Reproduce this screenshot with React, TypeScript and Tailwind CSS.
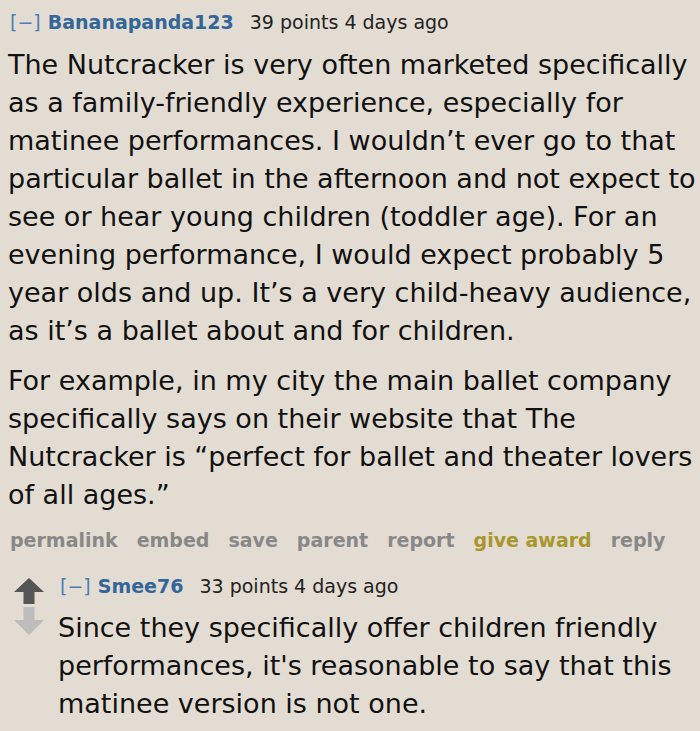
export default function App() {
  const font = { fontFamily: '"DejaVu Sans", Verdana, sans-serif' };
  return (
    <div className="min-h-[731px] w-[700px] overflow-hidden bg-[#e3dcd2] text-[#111]" style={font}>
      <div className="pl-[8px] pt-[8px]">
        <div className="flex items-baseline pl-[2px] text-[19px] leading-[28px]">
          <span className="text-[#4d7db7]">[−]</span>
          <span className="ml-[7px] font-bold text-[#336699]">Bananapanda123</span>
          <span className="ml-[16px] text-[#222]">39 points 4 days ago</span>
        </div>
        <div className="mt-[10px] text-[27px] leading-[38px]">
          <p>
            The Nutcracker is very often marketed specifically as a family-friendly experience,
            especially for matinee performances. I wouldn’t ever go to that particular ballet in
            the afternoon and not expect to see or hear young children (toddler age). For an
            evening performance, I would expect probably 5 year olds and up. It’s a very
            child-heavy audience, as it’s a ballet about and for children.
          </p>
          <p className="mt-[12px]">
            For example, in my city the main ballet company specifically says on their website
            that The Nutcracker is “perfect for ballet and theater lovers of all ages.”
          </p>
        </div>
        <div className="mt-[12px] flex gap-[19px] pl-[2px] text-[19px] font-bold leading-[28px] text-[#888]">
          <span>permalink</span>
          <span>embed</span>
          <span>save</span>
          <span>parent</span>
          <span>report</span>
          <span className="text-[#a8972e]">give award</span>
          <span>reply</span>
        </div>
        <div className="mt-[18px] flex">
          <div className="flex w-[50px] shrink-0 flex-col items-start pl-[6px] pt-[6px]">
            <svg width="30" height="26" viewBox="0 0 30 26">
              <path d="M15 0 L30 14 L20.5 14 L20.5 26 L9.5 26 L9.5 14 L0 14 Z" fill="#555" />
            </svg>
            <svg width="30" height="28" viewBox="0 0 30 28" className="mt-[3px]">
              <path d="M15 28 L30 13 L20.5 13 L20.5 0 L9.5 0 L9.5 13 L0 13 Z" fill="#bdbdbd" />
            </svg>
          </div>
          <div>
            <div className="flex items-baseline pl-[2px] text-[19px] leading-[28px]">
              <span className="text-[#4d7db7]">[−]</span>
              <span className="ml-[7px] font-bold text-[#336699]">Smee76</span>
              <span className="ml-[16px] text-[#222]">33 points 4 days ago</span>
            </div>
            <p className="mt-[9px] text-[27px] leading-[38px]">
              Since they specifically offer children friendly performances, it's reasonable to
              say that this matinee version is not one.
            </p>
          </div>
        </div>
      </div>
    </div>
  );
}
